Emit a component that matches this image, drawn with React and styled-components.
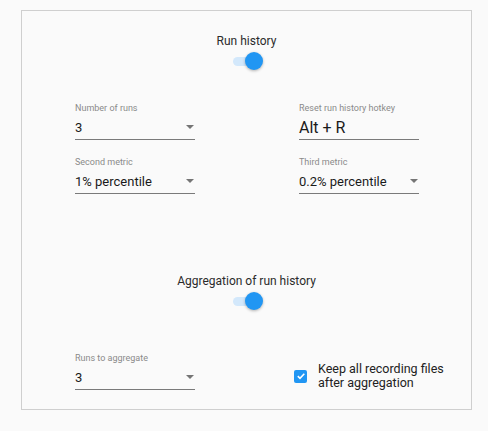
import React from 'react'
import styled, { createGlobalStyle } from 'styled-components'

const GlobalStyle = createGlobalStyle`
    html, body {
        margin: 0;
        background: #fafafa;
        font-family: Roboto, 'Liberation Sans', sans-serif;
        color: #212121;
    }
    #root {
        padding: 10px 0 0 21px;
    }
`

const Panel = styled.div`
    box-sizing: border-box;
    width: 451px;
    height: 400px;
    border: 1px solid #cfcfcf;
    padding-top: 22px;
`

const Section = styled.div`
    display: flex;
    flex-direction: column;
    align-items: center;
    margin-top: ${(p) => p.$top || 0}px;
`

const Title = styled.div`
    font-size: 12px;
    line-height: 16px;
    color: #2b2b2b;
`

const Toggle = styled.div`
    position: relative;
    width: 30px;
    height: 18px;
    margin: 3px 0 0 2px;
`

const Track = styled.div`
    position: absolute;
    left: 0;
    top: 5px;
    width: 27px;
    height: 9px;
    border-radius: 5px;
    background: #d3e8fb;
`

const Thumb = styled.div`
    position: absolute;
    right: 0;
    top: 0;
    width: 18px;
    height: 18px;
    border-radius: 50%;
    background: #2196f3;
    box-shadow: 0 1px 3px rgba(0, 0, 0, 0.3);
`

const Fields = styled.div`
    display: grid;
    grid-template-columns: 120px 120px;
    justify-content: space-between;
    row-gap: 16px;
    padding: 0 52px 0 53px;
    margin-top: ${(p) => p.$top || 0}px;
`

const Field = styled.div`
    display: flex;
    flex-direction: column;
`

const Label = styled.div`
    font-size: 9px;
    line-height: 12px;
    color: #8a8a8a;
`

const Value = styled.div`
    display: flex;
    align-items: center;
    justify-content: space-between;
    height: 24px;
    border-bottom: 1px solid #7a7a7a;
    font-size: ${(p) => (p.$large ? 16 : 13)}px;
    color: #1a1a1a;
    padding-top: 1px;
`

const Caret = styled.span`
    width: 0;
    height: 0;
    margin-right: 1px;
    border-left: 4px solid transparent;
    border-right: 4px solid transparent;
    border-top: 4px solid #757575;
`

const CheckRow = styled.label`
    display: flex;
    align-items: center;
    gap: 11px;
    margin: 10px 0 0 -5px;
    font-size: 12.5px;
    line-height: 14px;
    color: #222;
    white-space: nowrap;
`

const Box = styled.span`
    flex: 0 0 13px;
    width: 13px;
    height: 13px;
    border-radius: 2px;
    background: #2196f3;
    display: flex;
    align-items: center;
    justify-content: center;
`

const Select = ({ label, value }) => (
    <Field>
        <Label>{label}</Label>
        <Value>
            {value}
            <Caret />
        </Value>
    </Field>
)

const Switch = () => (
    <Toggle>
        <Track />
        <Thumb />
    </Toggle>
)

const App = () => (
    <>
        <GlobalStyle />
        <Panel>
            <Section>
                <Title>Run history</Title>
                <Switch />
            </Section>
            <Fields $top={32}>
                <Select label="Number of runs" value="3" />
                <Field>
                    <Label>Reset run history hotkey</Label>
                    <Value $large>Alt + R</Value>
                </Field>
                <Select label="Second metric" value="1% percentile" />
                <Select label="Third metric" value="0.2% percentile" />
            </Fields>
            <Section $top={79}>
                <Title>Aggregation of run history</Title>
                <Switch />
            </Section>
            <Fields $top={42}>
                <Select label="Runs to aggregate" value="3" />
                <CheckRow>
                    <Box>
                        <svg width="10" height="10" viewBox="0 0 10 10">
                            <path
                                d="M1.8 5.2 L4 7.3 L8.3 2.8"
                                fill="none"
                                stroke="#fff"
                                strokeWidth="1.6"
                            />
                        </svg>
                    </Box>
                    <span>
                        Keep all recording files
                        <br />
                        after aggregation
                    </span>
                </CheckRow>
            </Fields>
        </Panel>
    </>
)

export default App
